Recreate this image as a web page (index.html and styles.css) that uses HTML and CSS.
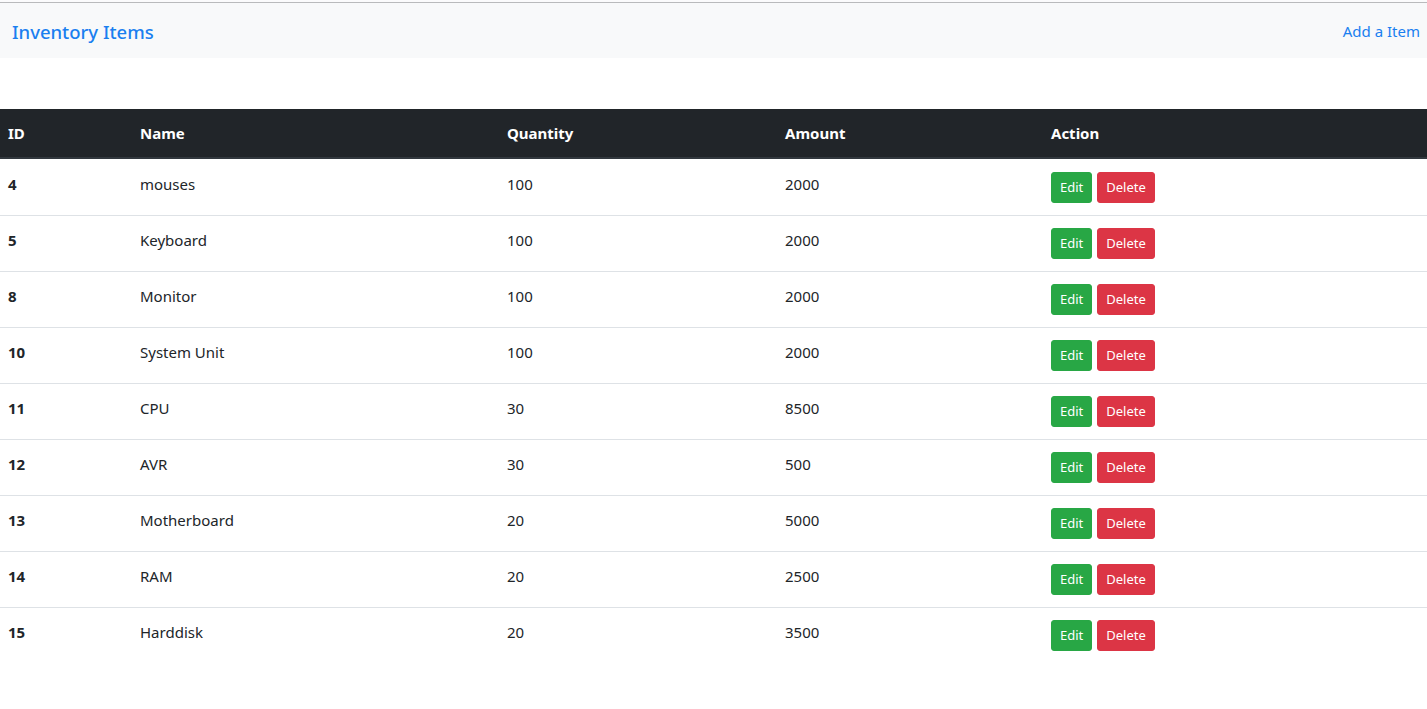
FILE: index.html
```html
<!DOCTYPE html>
<html>
<head>
<meta charset="utf-8">
<title>Inventory Items</title>
<link rel="stylesheet" href="styles.css">
</head>
<body>
<div class="topline"></div>
<nav class="navbar">
  <a class="brand" href="#">Inventory Items</a>
  <a class="nav-link" href="#">Add a Item</a>
</nav>
<main class="content">
  <table class="table">
    <colgroup>
      <col class="c-id"><col class="c-name"><col class="c-qty"><col class="c-amt"><col class="c-act">
    </colgroup>
    <thead>
      <tr><th>ID</th><th>Name</th><th>Quantity</th><th>Amount</th><th>Action</th></tr>
    </thead>
    <tbody>
      <tr><th>4</th><td>mouses</td><td>100</td><td>2000</td><td><button class="btn btn-edit">Edit</button><button class="btn btn-del">Delete</button></td></tr>
      <tr><th>5</th><td>Keyboard</td><td>100</td><td>2000</td><td><button class="btn btn-edit">Edit</button><button class="btn btn-del">Delete</button></td></tr>
      <tr><th>8</th><td>Monitor</td><td>100</td><td>2000</td><td><button class="btn btn-edit">Edit</button><button class="btn btn-del">Delete</button></td></tr>
      <tr><th>10</th><td>System Unit</td><td>100</td><td>2000</td><td><button class="btn btn-edit">Edit</button><button class="btn btn-del">Delete</button></td></tr>
      <tr><th>11</th><td>CPU</td><td>30</td><td>8500</td><td><button class="btn btn-edit">Edit</button><button class="btn btn-del">Delete</button></td></tr>
      <tr><th>12</th><td>AVR</td><td>30</td><td>500</td><td><button class="btn btn-edit">Edit</button><button class="btn btn-del">Delete</button></td></tr>
      <tr><th>13</th><td>Motherboard</td><td>20</td><td>5000</td><td><button class="btn btn-edit">Edit</button><button class="btn btn-del">Delete</button></td></tr>
      <tr><th>14</th><td>RAM</td><td>20</td><td>2500</td><td><button class="btn btn-edit">Edit</button><button class="btn btn-del">Delete</button></td></tr>
      <tr><th>15</th><td>Harddisk</td><td>20</td><td>3500</td><td><button class="btn btn-edit">Edit</button><button class="btn btn-del">Delete</button></td></tr>
    </tbody>
  </table>
</main>
</body>
</html>
```
FILE: styles.css
```css
html, body {
  margin: 0;
  padding: 0;
}
body {
  font-family: "Noto Sans", "Open Sans", sans-serif;
  font-size: 15px;
  line-height: 24px;
  color: #212529;
  background: #fff;
}
.topline {
  height: 2px;
  border-bottom: 1px solid #b9babc;
  background: #fbfbfc;
}
.navbar {
  height: 55px;
  background: #f8f9fa;
  display: flex;
  align-items: center;
  justify-content: space-between;
  padding: 0 7px 0 12px;
}
.brand {
  color: #1a7ff0;
  font-size: 18.5px;
  font-weight: 500;
  text-decoration: none;
  padding-top: 3px;
}
.nav-link {
  color: #1a7ff0;
  font-size: 15px;
  text-decoration: none;
  padding-top: 1px;
}
.content {
  padding-top: 51px;
}
.table {
  width: 100%;
  border-collapse: separate;
  border-spacing: 0;
  table-layout: fixed;
}
.c-id { width: 132px; }
.c-name { width: 367px; }
.c-qty { width: 278px; }
.c-amt { width: 266px; }
.c-act { width: auto; }
.table th,
.table td {
  padding: 12px 8px;
  text-align: left;
  vertical-align: top;
}
.table thead th {
  background: #212529;
  color: #fff;
  font-weight: 700;
  border-bottom: 2px solid #32383e;
}
.table tbody th,
.table tbody td {
  border-top: 1px solid #dee2e6;
}
.table tbody tr:first-child th,
.table tbody tr:first-child td {
  border-top: 0;
  padding-top: 13px;
}
.table tbody th {
  font-weight: 700;
}
.btn {
  display: inline-block;
  font-family: inherit;
  font-size: 13px;
  line-height: 21px;
  padding: 4px 8px;
  border: 1px solid transparent;
  border-radius: 3px;
  color: #fff;
  cursor: pointer;
  vertical-align: top;
}
.btn-edit {
  background: #28a745;
  border-color: #28a745;
  margin-right: 5px;
}
.btn-del {
  background: #dc3545;
  border-color: #dc3545;
}
```
